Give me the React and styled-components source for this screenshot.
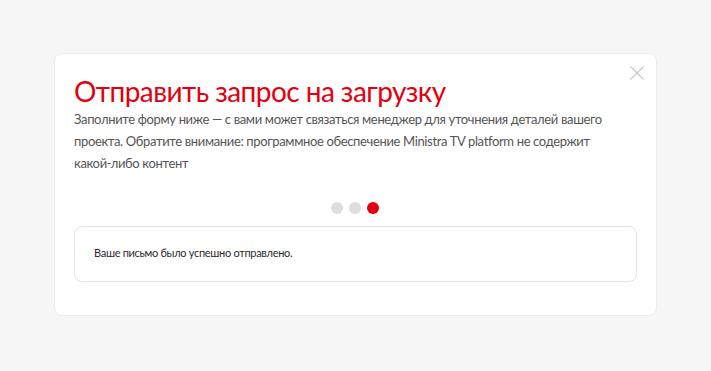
import React from 'react';
import styled, { createGlobalStyle } from 'styled-components';

const GlobalStyle = createGlobalStyle`
  html, body {
    margin: 0;
    padding: 0;
    background: #f6f6f6;
  }
  body {
    font-family: "Lato", "Open Sans", sans-serif;
  }
`;

const Page = styled.div`
  width: 711px;
  height: 371px;
  box-sizing: border-box;
  padding: 53px 54px 0;
`;

const Card = styled.div`
  position: relative;
  box-sizing: border-box;
  width: 603px;
  height: 263px;
  background: #fff;
  border: 1px solid #ececec;
  border-radius: 8px;
  padding: 20px 19px 0;
`;

const Close = styled.button`
  position: absolute;
  top: 11px;
  right: 11px;
  width: 16px;
  height: 16px;
  padding: 0;
  border: 0;
  background: none;
  cursor: pointer;

  svg {
    display: block;
  }
`;

const Title = styled.h2`
  margin: 0;
  font-weight: 400;
  font-size: 28px;
  line-height: 34px;
  letter-spacing: -0.55px;
  color: #e3000f;
`;

const Lead = styled.p`
  margin: 0;
  width: 545px;
  font-size: 13px;
  line-height: 22px;
  letter-spacing: -0.35px;
  color: #555;
`;

const Steps = styled.div`
  display: flex;
  justify-content: center;
  gap: 6px;
  margin-top: 28px;
  padding-right: 2px;
`;

const Dot = styled.span`
  width: 12px;
  height: 12px;
  border-radius: 50%;
  background: ${(p) => (p.$active ? '#e3000f' : '#dddddd')};
`;

const Message = styled.div`
  box-sizing: border-box;
  height: 56px;
  margin-top: 12px;
  display: flex;
  align-items: center;
  padding: 0 19px 4px;
  border: 1px solid #e4e4e4;
  border-radius: 8px;
  font-size: 11px;
  letter-spacing: -0.3px;
  color: #2b2b2b;
`;

const App = () => (
  <Page>
    <GlobalStyle />
    <Card>
      <Close aria-label="Закрыть">
        <svg width="16" height="16" viewBox="0 0 16 16">
          <path d="M1.5 1.5 L14.5 14.5 M14.5 1.5 L1.5 14.5" stroke="#c8c8c8" strokeWidth="1.2" />
        </svg>
      </Close>
      <Title>Отправить запрос на загрузку</Title>
      <Lead>
        Заполните форму ниже — с вами может связаться менеджер для уточнения деталей вашего
        проекта. Обратите внимание: программное обеспечение Ministra TV platform не содержит
        какой-либо контент
      </Lead>
      <Steps>
        <Dot />
        <Dot />
        <Dot $active />
      </Steps>
      <Message>Ваше письмо было успешно отправлено.</Message>
    </Card>
  </Page>
);

export default App;
